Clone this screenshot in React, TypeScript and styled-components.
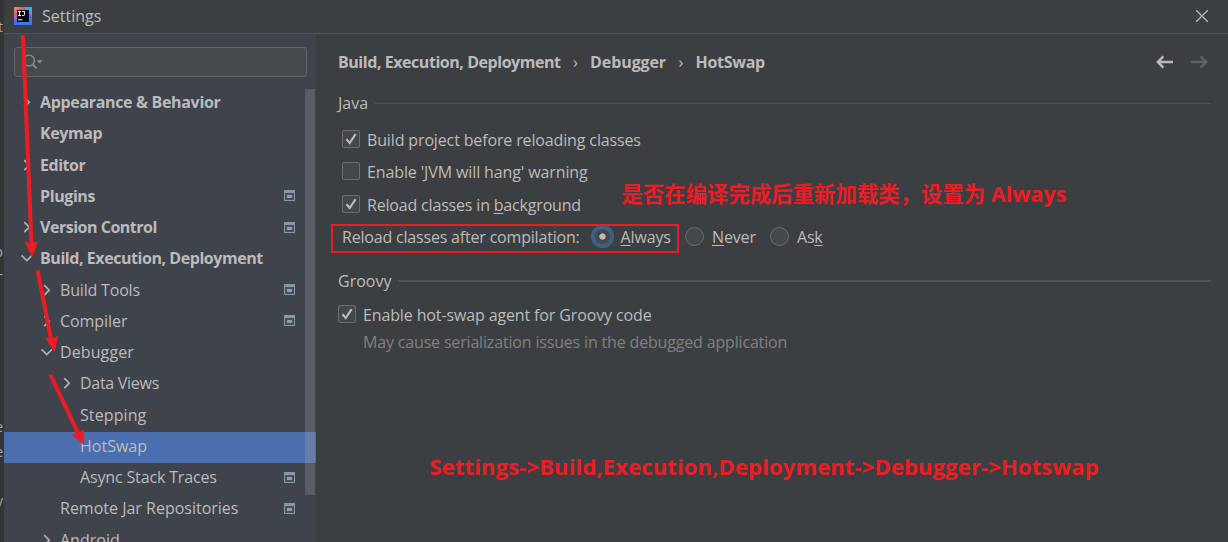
import styled, { createGlobalStyle } from 'styled-components';

const color = {
  bgPrimary: '#3c3f41',
  bgSidebar: '#3f434c',
  bgField: '#45494a',
  border: '#515355',
  fieldBorder: '#646464',
  text: '#bbbbbb',
  textMuted: '#808080',
  selected: '#4b6eaf',
  note: '#ed1c24',
};

type TreeItem = {
  label: string;
  level: number;
  arrow?: 'right' | 'down';
  badge?: boolean;
  selected?: boolean;
  tracking?: number;
};

const treeItems: TreeItem[] = [
  { label: 'Appearance & Behavior', level: 0, arrow: 'right', tracking: -0.33 },
  { label: 'Keymap', level: 0, tracking: -0.4 },
  { label: 'Editor', level: 0, arrow: 'right', tracking: -0.45 },
  { label: 'Plugins', level: 0, badge: true, tracking: -0.4 },
  { label: 'Version Control', level: 0, arrow: 'right', badge: true, tracking: -0.48 },
  { label: 'Build, Execution, Deployment', level: 0, arrow: 'down', tracking: -0.44 },
  { label: 'Build Tools', level: 1, arrow: 'right', badge: true, tracking: -0.18 },
  { label: 'Compiler', level: 1, arrow: 'right', badge: true, tracking: -0.05 },
  { label: 'Debugger', level: 1, arrow: 'down', tracking: 0.1 },
  { label: 'Data Views', level: 2, arrow: 'right', tracking: -0.28 },
  { label: 'Stepping', level: 2, tracking: 0.1 },
  { label: 'HotSwap', level: 2, selected: true },
  { label: 'Async Stack Traces', level: 2, badge: true, tracking: -0.15 },
  { label: 'Remote Jar Repositories', level: 1, badge: true },
  { label: 'Android', level: 1, arrow: 'right' },
];

const Logo = () => (
  <svg width="18" height="18" viewBox="0 0 18 18">
    <defs>
      <linearGradient id="logo" x1="0" y1="0" x2="1" y2="1">
        <stop offset="0" stopColor="#fc8d4c" />
        <stop offset="0.3" stopColor="#e0558b" />
        <stop offset="0.5" stopColor="#3c7df0" />
        <stop offset="1" stopColor="#2a7cf7" />
      </linearGradient>
    </defs>
    <rect width="18" height="18" fill="url(#logo)" />
    <path d="M10 0h8v9z" fill="#3fa7f5" />
    <path d="M0 12v6h7z" fill="#3d6df2" />
    <rect x="3" y="3" width="12" height="12" fill="#080410" />
    <path
      d="M4 4.5h3M5.5 4.5v4M4 8.5h3M8 4.5h2.5v3.2q0 .8-.8.8H8M4 12.8h4.5"
      fill="none"
      stroke="#fff"
      strokeWidth="1"
    />
  </svg>
);

const Chevron = ({ direction }: { direction: 'right' | 'down' }) => (
  <svg width="12" height="12" viewBox="0 0 12 12">
    <path
      d={direction === 'right' ? 'M4.2 1.2 9.2 6.2l-5 5' : 'M1.6 3.4 6.8 8.6l5.2-5.2'}
      fill="none"
      stroke="#afb1b3"
      strokeWidth="1.7"
    />
  </svg>
);

const ProjectBadge = () => (
  <svg width="11" height="11" viewBox="0 0 11 11" shapeRendering="crispEdges">
    <rect width="11" height="11" fill="#8797a3" />
    <rect x="1" y="3" width="9" height="7" fill="#46515b" />
    <rect x="3" y="5" width="5" height="3" fill="#8f9ea9" />
  </svg>
);

const HotSwapSettings = (): JSX.Element => {
  return (
    <Screen>
      <GlobalStyle />
      <EditorStrip>
        <StripText $top={20}>t</StripText>
        <StripText $top={245}>o</StripText>
        <StripText $top={267}>-</StripText>
        <StripText $top={420}>e</StripText>
        <StripText $top={445}>e</StripText>
        <StripText $top={494}>y</StripText>
      </EditorStrip>
      <Dialog>
        <TitleBar>
          <Logo />
          <span>Settings</span>
          <svg width="14" height="14" viewBox="0 0 14 14">
            <path d="M1.2 1.2l11.6 11.6M12.8 1.2 1.2 12.8" stroke="#bbb" strokeWidth="1.3" />
          </svg>
        </TitleBar>
        <Content>
          <Sidebar>
            <SearchField>
              <svg width="20" height="16" viewBox="0 0 20 16">
                <circle cx="6" cy="6.6" r="5.4" fill="none" stroke="#87939a" strokeWidth="1.3" />
                <path d="M10 10.6l3.6 3.8" stroke="#87939a" strokeWidth="1.6" />
                <path d="M13.6 6.2h6l-3 3.4z" fill="#87939a" />
              </svg>
            </SearchField>
            <Tree>
              {treeItems.map((item) => (
                <TreeRow key={item.label} $level={item.level} $selected={item.selected}>
                  <div className="arrow-wrapper">
                    {item.arrow && <Chevron direction={item.arrow} />}
                  </div>
                  <TreeLabel $bold={item.level === 0} $tracking={item.tracking}>
                    {item.label}
                  </TreeLabel>
                  {item.badge && <ProjectBadge />}
                </TreeRow>
              ))}
            </Tree>
            <Scrollbar />
          </Sidebar>
          <Main>
            <Breadcrumbs>
              <Text $tracking={-0.45}>Build, Execution, Deployment</Text>
              <i>›</i>
              <Text $tracking={-0.1}>Debugger</Text>
              <i>›</i>
              <Text $tracking={-0.3}>HotSwap</Text>
              <div className="nav-wrapper">
                <svg width="18" height="14" viewBox="0 0 18 14">
                  <path d="M17 7H2M7.4 1.4 1.8 7l5.6 5.6" fill="none" stroke="#bbb" strokeWidth="2.4" />
                </svg>
                <svg width="18" height="14" viewBox="0 0 18 14">
                  <path d="M1 7h15M10.6 1.4 16.2 7l-5.6 5.6" fill="none" stroke="#5e6062" strokeWidth="2.4" />
                </svg>
              </div>
            </Breadcrumbs>
            <SectionTitle>
              <Text>Java</Text>
            </SectionTitle>
            <OptionRow $height={33} $indent={4}>
              <Checkbox checked />
              <Text $tracking={-0.14}>Build project before reloading classes</Text>
            </OptionRow>
            <OptionRow $height={32} $indent={4}>
              <Checkbox />
              <Text $tracking={-0.12}>Enable 'JVM will hang' warning</Text>
            </OptionRow>
            <OptionRow $height={33} $indent={4}>
              <Checkbox checked />
              <Text $tracking={-0.18}>
                Reload classes in <u>b</u>ackground
              </Text>
            </OptionRow>
            <RadioRow>
              <Highlight>
                <Text $tracking={-0.19}>Reload classes after compilation:</Text>
                <Radio $checked />
                <Text $tracking={-0.15}>
                  <u>A</u>lways
                </Text>
              </Highlight>
              <RadioOption>
                <Radio />
                <Text $tracking={-0.15}>
                  <u>N</u>ever
                </Text>
              </RadioOption>
              <RadioOption>
                <Radio />
                <Text $tracking={-0.2}>
                  As<u>k</u>
                </Text>
              </RadioOption>
            </RadioRow>
            <SectionTitle $thick>
              <Text>Groovy</Text>
            </SectionTitle>
            <OptionRow $height={33} $indent={0}>
              <Checkbox checked />
              <Text $tracking={-0.13}>Enable hot-swap agent for Groovy code</Text>
            </OptionRow>
            <Hint>
              <Text $tracking={-0.17}>May cause serialization issues in the debugged application</Text>
            </Hint>
          </Main>
        </Content>
      </Dialog>
      <Note $left={621.5} $top={179} $size={21.33} $tracking={0.07}>
        是否在编译完成后重新加载类，设置为 Always
      </Note>
      <Note $left={429.5} $top={451} $size={22} $tracking={0.13}>
        {'Settings->Build,Execution,Deployment->Debugger->Hotswap'}
      </Note>
      <Arrows width="320" height="542" viewBox="0 0 320 542">
        <path d="M23 37l8.5 208M38 272l13 67M51 376l28 59" />
        <polygon points="24.5,241.5 31.3,243.5 38.2,241 32,257.5" />
        <polygon points="45,338 51.5,339 58.5,335.5 54.5,352" />
        <polygon points="71.5,434.5 78,434 83.5,428.5 84,445" />
      </Arrows>
    </Screen>
  );
};

const Checkbox = ({ checked }: { checked?: boolean }) => (
  <CheckboxBox>
    {checked && (
      <svg width="12" height="12" viewBox="0 0 12 12">
        <path d="M1.5 6.3 4.7 10 10.6 1.2" fill="none" stroke="#bbb" strokeWidth="2.2" />
      </svg>
    )}
  </CheckboxBox>
);

const GlobalStyle = createGlobalStyle`
  * {
    box-sizing: border-box;
  }
  body {
    margin: 0;
    overflow: hidden;
    background-color: ${color.bgPrimary};
  }
  svg {
    display: block;
    flex-shrink: 0;
  }
`;

const Screen = styled.div`
  width: 1228px;
  height: 542px;
  position: relative;
  overflow: hidden;
  display: flex;
  font-family: 'Open Sans', 'Noto Sans', sans-serif;
  font-size: 16px;
  line-height: 22px;
  color: ${color.text};
  white-space: nowrap;
`;

const EditorStrip = styled.div`
  width: 4px;
  height: 100%;
  flex-shrink: 0;
  position: relative;
  overflow: hidden;
  background-color: #323537;
`;

const StripText = styled.span<{ $top: number }>`
  position: absolute;
  right: 1px;
  top: ${({ $top }) => $top}px;
  font-size: 14px;
  line-height: 14px;
  color: #a3a8ad;
`;

const Dialog = styled.div`
  flex: 1;
  display: flex;
  flex-direction: column;
  background-color: ${color.bgPrimary};
`;

const TitleBar = styled.div`
  height: 34px;
  display: flex;
  align-items: center;
  padding: 0 19px 2px 10px;
  gap: 10px;
  border-bottom: 1px solid ${color.border};
  span {
    flex: 1;
    padding-top: 1px;
  }
`;

const Content = styled.div`
  flex: 1;
  min-height: 0;
  display: flex;
`;

const Sidebar = styled.div`
  width: 312px;
  height: 508px;
  position: relative;
  overflow: hidden;
  background-color: ${color.bgSidebar};
`;

const SearchField = styled.div`
  width: 293px;
  height: 30px;
  margin: 13px 0 0 10px;
  padding-left: 8px;
  display: flex;
  align-items: center;
  border: 1px solid ${color.fieldBorder};
  border-radius: 3px;
  background-color: ${color.bgField};
`;

const Tree = styled.div`
  padding-top: 11px;
`;

const TreeRow = styled.div<{ $level: number; $selected?: boolean }>`
  height: 31.25px;
  display: flex;
  align-items: center;
  padding: 0 21px 3px ${({ $level }) => 16 + $level * 20}px;
  background-color: ${({ $selected }) => ($selected ? color.selected : 'transparent')};
  .arrow-wrapper {
    width: 20px;
  }
`;

const Text = styled.span<{ $tracking?: number }>`
  letter-spacing: ${({ $tracking = 0 }) => $tracking}px;
  u {
    text-underline-offset: 2px;
    text-decoration-thickness: 1px;
  }
`;

const TreeLabel = styled(Text)<{ $bold: boolean }>`
  flex: 1;
  font-weight: ${({ $bold }) => ($bold ? 700 : 400)};
`;

const Scrollbar = styled.div`
  width: 10px;
  height: 406px;
  position: absolute;
  top: 55px;
  right: 1px;
  background-color: rgba(166, 166, 166, 0.27);
`;

const Main = styled.div`
  flex: 1;
  display: flex;
  flex-direction: column;
  padding: 13px 17px 0 22px;
`;

const Breadcrumbs = styled.div`
  height: 30px;
  display: flex;
  align-items: center;
  font-weight: 700;
  i {
    width: 29.5px;
    font-style: normal;
    font-weight: 400;
    text-align: center;
  }
  .nav-wrapper {
    flex: 1;
    display: flex;
    justify-content: flex-end;
    gap: 16px;
    padding-right: 3px;
  }
`;

const SectionTitle = styled.div<{ $thick?: boolean }>`
  height: 22px;
  margin-top: ${({ $thick }) => ($thick ? 17 : 15)}px;
  margin-bottom: ${({ $thick }) => ($thick ? 6 : 9)}px;
  display: flex;
  align-items: center;
  gap: 7px;
  &::after {
    content: '';
    flex: 1;
    height: ${({ $thick }) => ($thick ? 2 : 1)}px;
    background-color: ${color.border};
  }
`;

const OptionRow = styled.div<{ $height: number; $indent: number }>`
  height: ${({ $height }) => $height}px;
  display: flex;
  align-items: center;
  gap: 7px;
  padding-left: ${({ $indent }) => $indent}px;
`;

const CheckboxBox = styled.div`
  width: 18px;
  height: 18px;
  margin-bottom: 2px;
  display: flex;
  justify-content: center;
  align-items: center;
  border: 1px solid #6b6b6b;
  border-radius: 2px;
  background-color: #43494a;
`;

const RadioRow = styled.div`
  height: 29px;
  display: flex;
  align-items: center;
  gap: 6px;
  margin: 3px 0 0 -7px;
`;

const Highlight = styled.div`
  width: 348px;
  height: 29px;
  display: flex;
  align-items: center;
  gap: 9px;
  padding: 0 0 4px 9px;
  border: 2px solid ${color.note};
`;

const RadioOption = styled.div`
  width: 79px;
  display: flex;
  align-items: center;
  gap: 8px;
  padding-bottom: 4px;
`;

const Radio = styled.div<{ $checked?: boolean }>`
  width: 19px;
  height: 19px;
  margin-left: ${({ $checked }) => ($checked ? 4 : 0)}px;
  border: 1px solid ${({ $checked }) => ($checked ? '#43698c' : '#6b6b6b')};
  border-radius: 50%;
  background: ${({ $checked }) =>
    $checked ? 'radial-gradient(circle, #bbb 2.8px, #43494a 3.5px)' : '#43494a'};
  box-shadow: ${({ $checked }) => ($checked ? '0 0 0 2px #3d6185, inset 0 0 0 1px #3d6185' : 'none')};
`;

const Hint = styled.div`
  padding-left: 25px;
  color: ${color.textMuted};
`;

const Note = styled.div<{ $left: number; $top: number; $size: number; $tracking: number }>`
  position: absolute;
  left: ${({ $left }) => $left}px;
  top: ${({ $top }) => $top}px;
  font-family: 'Open Sans', 'Noto Sans CJK SC', sans-serif;
  font-size: ${({ $size }) => $size}px;
  font-weight: 700;
  line-height: 30px;
  letter-spacing: ${({ $tracking }) => $tracking}px;
  color: ${color.note};
`;

const Arrows = styled.svg`
  position: absolute;
  top: 0;
  left: 0;
  path {
    fill: none;
    stroke: ${color.note};
    stroke-width: 4;
    stroke-linecap: round;
  }
  polygon {
    fill: ${color.note};
  }
`;

export default HotSwapSettings;
